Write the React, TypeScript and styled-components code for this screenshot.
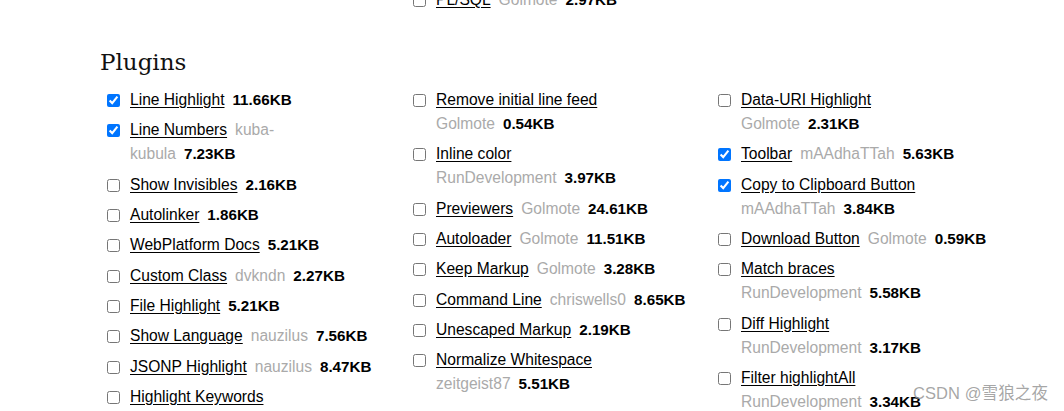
import React from "react";
import styled, { createGlobalStyle } from "styled-components";

const Global = createGlobalStyle`
  html, body { margin: 0; padding: 0; background: #fff; }
  body {
    font-family: "Liberation Sans", Arial, sans-serif;
    font-size: 15.6px;
    color: #000;
    overflow: hidden;
  }
`;

const Page = styled.main`
  position: relative;
  width: 1064px;
  height: 411px;
  overflow: hidden;
`;

const Scroll = styled.div`
  margin-top: -12px;
  padding-left: 103px;
`;

const Heading = styled.h2`
  margin: 34px 0 10px -3px;
  font-family: "DejaVu Serif", "Liberation Serif", serif;
  font-weight: normal;
  font-size: 23px;
  line-height: 32px;
  color: #111;
`;

const Columns = styled.div`
  display: grid;
  grid-template-columns: 306px 305px 305px;
  align-items: start;
`;

const List = styled.ul`
  list-style: none;
  margin: 0;
  padding: 0;
  display: flex;
  flex-direction: column;
  gap: 6.33px;
`;

const Item = styled.li`
  display: flex;
  align-items: flex-start;
  line-height: 24px;
`;

const Check = styled.input.attrs({ type: "checkbox" })`
  flex: none;
  width: 13px;
  height: 13px;
  margin: 6px 10px 0 4px;
`;

const Body = styled.div`
  flex: 1;
  white-space: nowrap;
`;

const Title = styled.a`
  color: #000;
  text-decoration: underline;
  text-underline-offset: 2px;
`;

const Meta = styled.span<{ $wrap?: boolean }>`
  display: ${(p) => (p.$wrap ? "block" : "inline")};
  margin-left: ${(p) => (p.$wrap ? "0" : "8px")};
`;

const Author = styled.span`
  color: #aaa;
  margin-right: 8px;
`;

const Size = styled.span`
  font-weight: bold;
  font-size: 15.2px;
  color: #000;
`;

const Watermark = styled.div`
  position: absolute;
  right: 16px;
  bottom: 7px;
  font-family: "Liberation Sans", "Noto Sans CJK SC", sans-serif;
  font-size: 16.5px;
  color: rgba(150, 150, 150, 0.85);
  letter-spacing: 0.1px;
`;

type Plugin = {
  title: string;
  author?: string[];
  size?: string;
  checked?: boolean;
  wrap?: boolean;
};

const Row: React.FC<{ p: Plugin }> = ({ p }) => (
  <Item>
    <Check defaultChecked={p.checked} />
    <Body>
      <Title href="#">{p.title}</Title>
      {(p.author || p.size) && (
        <Meta $wrap={p.wrap}>
          {p.author && (
            <Author>
              {p.author.map((part, i) => (
                <React.Fragment key={i}>
                  {i > 0 && <br />}
                  {part}
                </React.Fragment>
              ))}
            </Author>
          )}
          {p.size && <Size>{p.size}</Size>}
        </Meta>
      )}
    </Body>
  </Item>
);

const col1: Plugin[] = [
  { title: "Line Highlight", size: "11.66KB", checked: true },
  { title: "Line Numbers", author: ["kuba-", "kubula"], size: "7.23KB", checked: true },
  { title: "Show Invisibles", size: "2.16KB" },
  { title: "Autolinker", size: "1.86KB" },
  { title: "WebPlatform Docs", size: "5.21KB" },
  { title: "Custom Class", author: ["dvkndn"], size: "2.27KB" },
  { title: "File Highlight", size: "5.21KB" },
  { title: "Show Language", author: ["nauzilus"], size: "7.56KB" },
  { title: "JSONP Highlight", author: ["nauzilus"], size: "8.47KB" },
  { title: "Highlight Keywords" },
];

const col2: Plugin[] = [
  { title: "Remove initial line feed", author: ["Golmote"], size: "0.54KB", wrap: true },
  { title: "Inline color", author: ["RunDevelopment"], size: "3.97KB", wrap: true },
  { title: "Previewers", author: ["Golmote"], size: "24.61KB" },
  { title: "Autoloader", author: ["Golmote"], size: "11.51KB" },
  { title: "Keep Markup", author: ["Golmote"], size: "3.28KB" },
  { title: "Command Line", author: ["chriswells0"], size: "8.65KB" },
  { title: "Unescaped Markup", size: "2.19KB" },
  { title: "Normalize Whitespace", author: ["zeitgeist87"], size: "5.51KB", wrap: true },
];

const col3: Plugin[] = [
  { title: "Data-URI Highlight", author: ["Golmote"], size: "2.31KB", wrap: true },
  { title: "Toolbar", author: ["mAAdhaTTah"], size: "5.63KB", checked: true },
  { title: "Copy to Clipboard Button", author: ["mAAdhaTTah"], size: "3.84KB", checked: true, wrap: true },
  { title: "Download Button", author: ["Golmote"], size: "0.59KB" },
  { title: "Match braces", author: ["RunDevelopment"], size: "5.58KB", wrap: true },
  { title: "Diff Highlight", author: ["RunDevelopment"], size: "3.17KB", wrap: true },
  { title: "Filter highlightAll", author: ["RunDevelopment"], size: "3.34KB", wrap: true },
];

export default function App() {
  return (
    <Page>
      <Global />
      <Scroll>
        <Columns>
          <div />
          <List>
            <Row p={{ title: "PL/SQL", author: ["Golmote"], size: "2.97KB" }} />
          </List>
          <div />
        </Columns>
        <Heading>Plugins</Heading>
        <Columns>
          <List>{col1.map((p) => <Row key={p.title} p={p} />)}</List>
          <List>{col2.map((p) => <Row key={p.title} p={p} />)}</List>
          <List>{col3.map((p) => <Row key={p.title} p={p} />)}</List>
        </Columns>
      </Scroll>
      <Watermark>CSDN @雪狼之夜</Watermark>
    </Page>
  );
}
